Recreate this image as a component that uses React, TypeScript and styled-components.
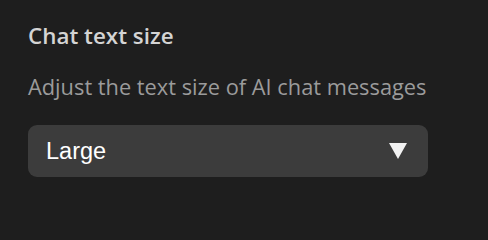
import React from "react";
import styled, { createGlobalStyle } from "styled-components";

const Global = createGlobalStyle`
  html, body { margin: 0; padding: 0; background: #1e1e1e; }
  body { width: 488px; height: 200px; overflow: hidden; }
`;

const Panel = styled.div`
  display: flex;
  flex-direction: column;
  padding: 22px 28px 0 28px;
  font-family: "Open Sans", "Noto Sans", sans-serif;
`;

const Title = styled.div`
  font-size: 22.4px;
  font-weight: 600;
  line-height: 28px;
  color: #d4d4d4;
`;

const Description = styled.div`
  margin-top: 23px;
  font-size: 21.8px;
  font-weight: 400;
  line-height: 28px;
  color: #9b9b9b;
`;

const Select = styled.div`
  margin-top: 24px;
  width: 400px;
  height: 52px;
  box-sizing: border-box;
  border-radius: 9px;
  background: #3c3c3c;
  display: flex;
  align-items: center;
  justify-content: space-between;
  padding: 0 21px 0 18px;
`;

const Value = styled.span`
  font-family: "Liberation Sans", Arial, sans-serif;
  font-size: 23.5px;
  color: #ffffff;
`;

const Arrow = styled.svg`
  width: 18px;
  height: 16px;
  display: block;
`;

export default function App() {
  return (
    <>
      <Global />
      <Panel>
        <Title>Chat text size</Title>
        <Description>Adjust the text size of AI chat messages</Description>
        <Select>
          <Value>Large</Value>
          <Arrow viewBox="0 0 18 16">
            <polygon points="0,0 18,0 9,16" fill="#f2f2f2" />
          </Arrow>
        </Select>
      </Panel>
    </>
  );
}
